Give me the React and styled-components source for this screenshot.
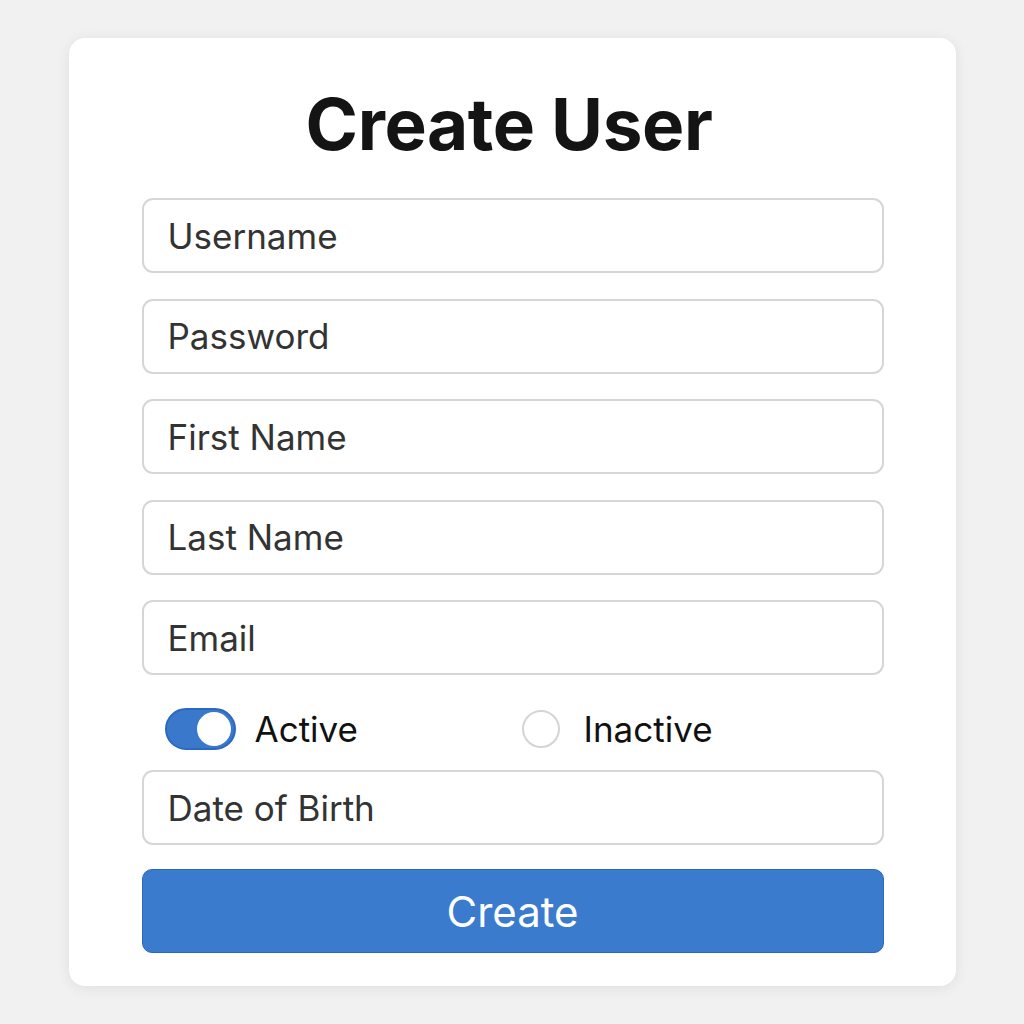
import styled, { createGlobalStyle } from "styled-components";

const Global = createGlobalStyle`
  html, body {
    margin: 0;
    padding: 0;
    background: #f1f1f1;
    font-family: Inter, "Noto Sans", Arial, sans-serif;
  }
`;

const Page = styled.div`
  width: 1024px;
  height: 1024px;
  display: flex;
  justify-content: center;
  padding-top: 38px;
  box-sizing: border-box;
`;

const Card = styled.form`
  width: 887px;
  height: 948px;
  box-sizing: border-box;
  background: #fff;
  border-radius: 16px;
  box-shadow: 0 2px 14px rgba(0, 0, 0, 0.08);
  padding: 42px 72px 0 73px;
  display: flex;
  flex-direction: column;
`;

const Title = styled.h1`
  margin: 0 0 30px;
  padding-right: 7px;
  text-align: center;
  font-size: 71px;
  font-weight: 700;
  color: #141414;
  line-height: 88px;
  letter-spacing: -0.4px;
`;

const Field = styled.input`
  height: 75px;
  flex-shrink: 0;
  box-sizing: border-box;
  border: 2px solid #d6d6d6;
  border-radius: 11px;
  padding: 0 24px;
  font-family: inherit;
  font-size: 35px;
  color: #333;
  margin-bottom: ${(p) => p.gap ?? 25.5}px;
  outline: none;
  &::placeholder {
    color: #333;
  }
`;

const StatusRow = styled.div`
  display: flex;
  align-items: center;
  height: 44px;
  flex-shrink: 0;
  padding-left: 23px;
  margin: 32px 0 19px;
`;

const Option = styled.label`
  display: flex;
  align-items: center;
  gap: ${(p) => p.gap || 19}px;
  font-size: 35px;
  color: #111;
  width: ${(p) => p.width || "auto"};
`;

const Toggle = styled.span`
  width: 71px;
  height: 42px;
  border-radius: 21px;
  background: #3a78cc;
  box-sizing: border-box;
  border: 2px solid #2b69c0;
  display: flex;
  align-items: center;
  justify-content: flex-end;
  padding-right: 3px;
  &::after {
    content: "";
    width: 34px;
    height: 34px;
    border-radius: 50%;
    background: #fff;
  }
`;

const Radio = styled.span`
  width: 38px;
  height: 38px;
  box-sizing: border-box;
  border-radius: 50%;
  border: 2px solid #d4d4d4;
  background: #fff;
`;

const Button = styled.button`
  height: 84px;
  flex-shrink: 0;
  border: 1px solid #2c68bd;
  border-radius: 10px;
  background: #3a7bce;
  color: #fff;
  font-family: inherit;
  font-size: 42px;
  font-weight: 400;
  cursor: pointer;
`;

export default function App() {
  return (
    <>
      <Global />
      <Page>
        <Card onSubmit={(e) => e.preventDefault()}>
          <Title>Create User</Title>
          <Field placeholder="Username" />
          <Field placeholder="Password" />
          <Field placeholder="First Name" />
          <Field placeholder="Last Name" />
          <Field placeholder="Email" gap={0} />
          <StatusRow>
            <Option width="357px">
              <Toggle />
              Active
            </Option>
            <Option gap={24}>
              <Radio />
              Inactive
            </Option>
          </StatusRow>
          <Field placeholder="Date of Birth" gap={24} />
          <Button type="submit">Create</Button>
        </Card>
      </Page>
    </>
  );
}
